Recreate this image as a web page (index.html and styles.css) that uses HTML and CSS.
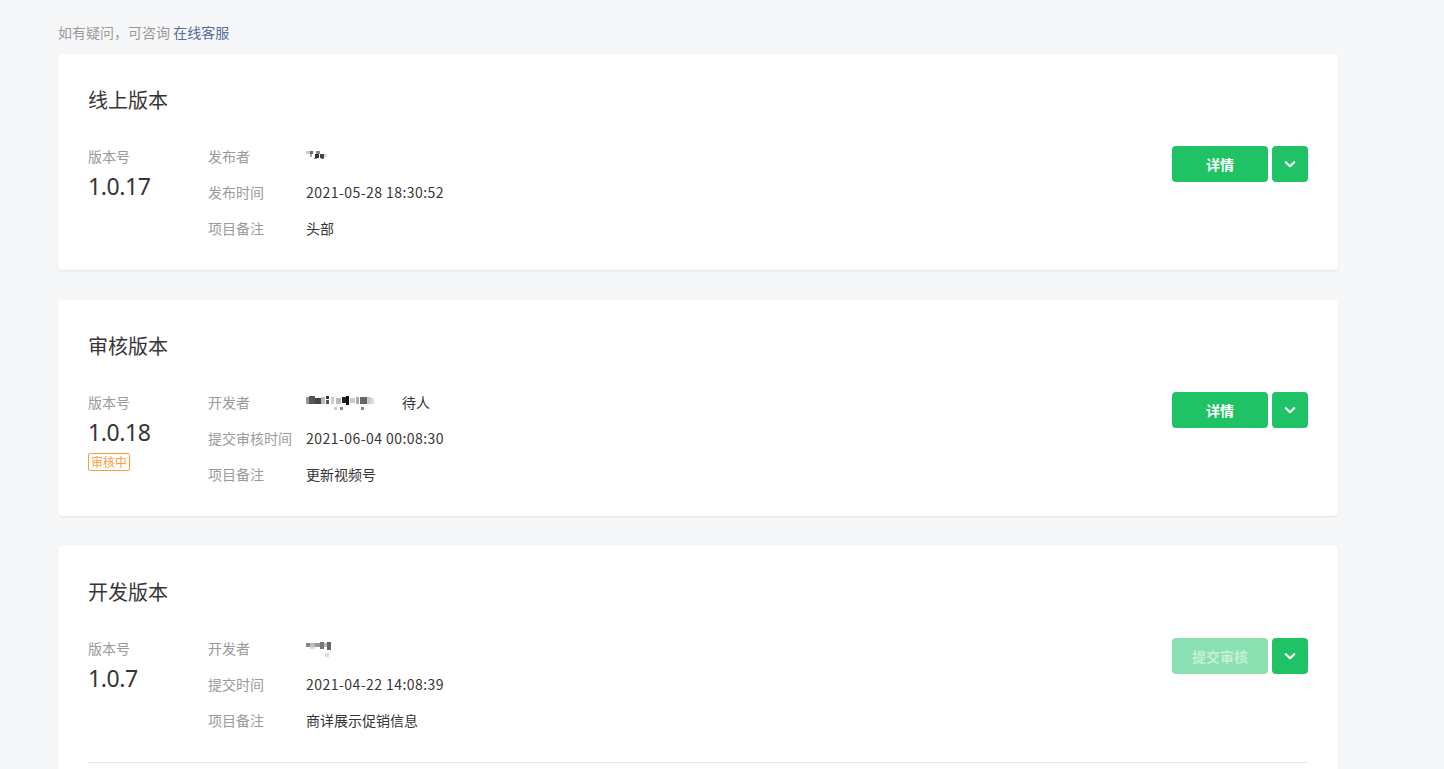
FILE: index.html
```html
<!DOCTYPE html>
<html lang="zh-CN">
<head>
<meta charset="utf-8">
<title>版本管理</title>
<link rel="stylesheet" href="styles.css">
</head>
<body>
<div class="page">
  <p class="hint">如有疑问，可咨询 <a class="hint-link" href="#">在线客服</a></p>

  <section class="card">
    <h2 class="card-title">线上版本</h2>
    <div class="card-body">
      <div class="ver">
        <div class="ver-label">版本号</div>
        <div class="ver-num">1.0.17</div>
      </div>
      <dl class="info">
        <div class="row"><dt>发布者</dt><dd>
          <svg class="mosaic" width="30" height="14" viewBox="0 0 30 14"><rect x="0" y="2" width="4" height="3" fill="#ccc"/><rect x="4" y="2" width="3" height="3" fill="#666"/><rect x="4" y="5" width="2" height="3" fill="#aaa"/><rect x="10" y="2" width="4" height="3" fill="#888"/><rect x="9" y="5" width="4" height="4" fill="#333"/><rect x="14" y="5" width="4" height="4" fill="#444"/><rect x="18" y="5" width="3" height="3" fill="#ddd"/><rect x="8" y="9" width="3" height="1" fill="#777"/><rect x="15" y="9" width="3" height="1" fill="#777"/></svg>
        </dd></div>
        <div class="row"><dt>发布时间</dt><dd class="num">2021-05-28 18:30:52</dd></div>
        <div class="row"><dt>项目备注</dt><dd>头部</dd></div>
      </dl>
      <div class="actions">
        <button class="btn btn-primary">详情</button>
        <button class="btn btn-icon" aria-label="更多"><svg width="14" height="14" viewBox="0 0 14 14"><path d="M2.8 5.2 L7 9.2 L11.2 5.2" fill="none" stroke="#fff" stroke-width="2.2" stroke-linecap="round" stroke-linejoin="round"/></svg></button>
      </div>
    </div>
  </section>

  <section class="card">
    <h2 class="card-title">审核版本</h2>
    <div class="card-body">
      <div class="ver">
        <div class="ver-label">版本号</div>
        <div class="ver-num">1.0.18</div>
        <span class="tag">审核中</span>
      </div>
      <dl class="info">
        <div class="row"><dt>开发者</dt><dd>
          <svg class="mosaic" width="96" height="18" viewBox="0 0 96 18"><rect x="0" y="4" width="3" height="7" fill="#999"/><rect x="3" y="3" width="6" height="8" fill="#555"/><rect x="9" y="5" width="6" height="6" fill="#444"/><rect x="15" y="4" width="4" height="7" fill="#bbb"/><rect x="20" y="3" width="3" height="3" fill="#333"/><rect x="20" y="7" width="3" height="4" fill="#555"/><rect x="25" y="4" width="3" height="7" fill="#ccc"/><rect x="30" y="5" width="5" height="6" fill="#bbb"/><rect x="36" y="4" width="4" height="6" fill="#222"/><rect x="40" y="3" width="3" height="9" fill="#111"/><rect x="44" y="5" width="5" height="5" fill="#ccc"/><rect x="50" y="4" width="3" height="7" fill="#aaa"/><rect x="54" y="4" width="7" height="7" fill="#666"/><rect x="61" y="4" width="4" height="7" fill="#ccc"/><rect x="65" y="5" width="3" height="6" fill="#ddd"/><rect x="28" y="14" width="3" height="3" fill="#ccc"/><rect x="34" y="14" width="3" height="3" fill="#888"/><rect x="55" y="14" width="3" height="3" fill="#888"/></svg><span class="name-tail">待人</span>
        </dd></div>
        <div class="row"><dt>提交审核时间</dt><dd class="num">2021-06-04 00:08:30</dd></div>
        <div class="row"><dt>项目备注</dt><dd>更新视频号</dd></div>
      </dl>
      <div class="actions">
        <button class="btn btn-primary">详情</button>
        <button class="btn btn-icon" aria-label="更多"><svg width="14" height="14" viewBox="0 0 14 14"><path d="M2.8 5.2 L7 9.2 L11.2 5.2" fill="none" stroke="#fff" stroke-width="2.2" stroke-linecap="round" stroke-linejoin="round"/></svg></button>
      </div>
    </div>
  </section>

  <section class="card card-last">
    <h2 class="card-title">开发版本</h2>
    <div class="card-body">
      <div class="ver">
        <div class="ver-label">版本号</div>
        <div class="ver-num">1.0.7</div>
      </div>
      <dl class="info">
        <div class="row"><dt>开发者</dt><dd>
          <svg class="mosaic" width="30" height="20" viewBox="0 0 30 20"><rect x="0" y="5" width="4" height="4" fill="#888"/><rect x="4" y="5" width="5" height="4" fill="#bbb"/><rect x="9" y="5" width="5" height="4" fill="#999"/><rect x="14" y="4" width="4" height="7" fill="#777"/><rect x="18" y="5" width="3" height="4" fill="#bbb"/><rect x="21" y="4" width="4" height="8" fill="#666"/><rect x="4" y="9" width="5" height="2" fill="#ddd"/><rect x="19" y="15" width="4" height="4" fill="#ddd"/></svg>
        </dd></div>
        <div class="row"><dt>提交时间</dt><dd class="num">2021-04-22 14:08:39</dd></div>
        <div class="row"><dt>项目备注</dt><dd>商详展示促销信息</dd></div>
      </dl>
      <div class="actions">
        <button class="btn btn-primary is-disabled">提交审核</button>
        <button class="btn btn-icon" aria-label="更多"><svg width="14" height="14" viewBox="0 0 14 14"><path d="M2.8 5.2 L7 9.2 L11.2 5.2" fill="none" stroke="#fff" stroke-width="2.2" stroke-linecap="round" stroke-linejoin="round"/></svg></button>
      </div>
    </div>
    <div class="divider"></div>
  </section>
</div>
</body>
</html>
```

FILE: styles.css
```css
html, body {
  margin: 0;
  padding: 0;
  background: #f6f7f9;
  font-family: "Noto Sans CJK SC", "Noto Sans", sans-serif;
  color: #353535;
  height: 769px;
  overflow: hidden;
}

.page {
  width: 1280px;
  margin-left: 58px;
  padding-top: 22px;
}

.hint {
  margin: 0 0 12px;
  font-size: 14px;
  line-height: 20px;
  color: #9a9a9a;
}

.hint-link {
  color: #576b95;
  text-decoration: none;
}

.card {
  background: #fff;
  border-radius: 4px;
  box-shadow: 0 1px 2px rgba(0, 0, 0, 0.08);
  padding: 30px 30px 31px;
  margin-bottom: 30px;
}

.card-title {
  margin: 0;
  font-size: 20px;
  font-weight: 400;
  line-height: 32px;
  color: #353535;
}

.card-body {
  display: flex;
  align-items: flex-start;
  margin-top: 29px;
}

.ver {
  width: 120px;
  flex: none;
}

.ver-label {
  font-size: 14px;
  line-height: 22px;
  color: #9a9a9a;
}

.ver-num {
  font-family: "Noto Sans", sans-serif;
  font-size: 23px;
  letter-spacing: -0.4px;
  line-height: 32px;
  color: #353535;
  margin-top: 3px;
}

.tag {
  display: inline-block;
  margin-top: 2px;
  padding: 0 2px;
  border: 1px solid #fa9d3b;
  border-radius: 2px;
  color: #fa9d3b;
  font-size: 12px;
  line-height: 16px;
}

.info {
  margin: 0;
  flex: 1;
  display: flex;
  flex-direction: column;
  gap: 14px;
}

.row {
  display: flex;
  font-size: 14px;
  line-height: 22px;
}

.row dt {
  width: 98px;
  flex: none;
  color: #9a9a9a;
}

.row dd {
  margin: 0;
  color: #353535;
  display: flex;
  align-items: center;
}

.row dd.num {
  letter-spacing: 0.45px;
}

.mosaic {
  display: block;
}

.name-tail {
  margin-left: 0;
}

.actions {
  display: flex;
  gap: 4px;
  margin-top: 1px;
}

.btn {
  border: 0;
  border-radius: 4px;
  height: 36px;
  font-family: inherit;
  font-size: 14px;
  font-weight: 700;
  color: #fff;
  background: #1fc264;
  padding: 0;
  cursor: pointer;
}

.btn-primary {
  width: 96px;
}

.btn-primary.is-disabled {
  background: #8ae0b0;
  color: #c6efd8;
  cursor: default;
}

.btn-icon {
  width: 36px;
  display: flex;
  align-items: center;
  justify-content: center;
}

.card-last {
  padding-bottom: 40px;
}

.divider {
  margin-top: 31px;
  height: 1px;
  background: #e7e7e7;
}
```
